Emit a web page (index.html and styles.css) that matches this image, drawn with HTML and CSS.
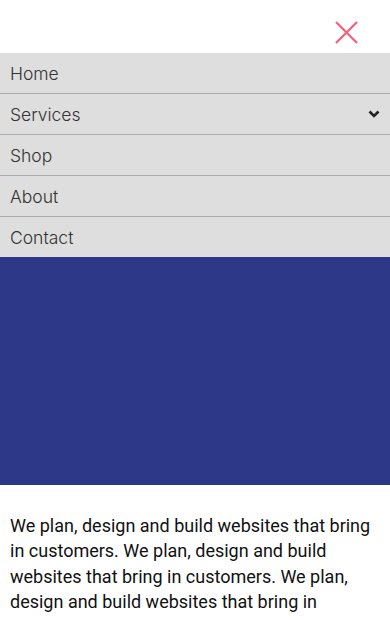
FILE: index.html
```html
<!DOCTYPE html>
<html>
<head>
<meta charset="utf-8">
<link rel="stylesheet" href="styles.css">
</head>
<body>
<header class="top">
  <button class="close" aria-label="Close">
    <svg width="24" height="24" viewBox="0 0 24 24"><path d="M2 1L23 22M23 1L2 22" stroke="#f5607a" stroke-width="2.2" fill="none"/></svg>
  </button>
</header>
<nav class="menu">
  <a class="item" href="#">Home</a>
  <a class="item" href="#">Services
    <svg class="chev" width="12" height="8" viewBox="0 0 12 8"><path d="M1.5 1.5L6 6L10.5 1.5" stroke="#222" stroke-width="2.6" fill="none"/></svg>
  </a>
  <a class="item" href="#">Shop</a>
  <a class="item" href="#">About</a>
  <a class="item" href="#">Contact</a>
</nav>
<section class="hero"></section>
<section class="content">
  <p>We plan, design and build websites that bring in customers. We plan, design and build websites that bring in customers. We plan, design and build websites that bring in customers.</p>
</section>
</body>
</html>
```
FILE: styles.css
```css
html, body { margin: 0; padding: 0; background: #fff; }
body { font-family: Roboto, "Liberation Sans", sans-serif; overflow: hidden; height: 620px; }
.top { height: 53px; display: flex; justify-content: flex-end; align-items: center; padding-right: 32px; }
.close { background: none; border: 0; padding: 0; margin-top: 12px; width: 24px; height: 24px; display: block; }
.close svg { display: block; }
.menu { background: #dedede; display: flex; flex-direction: column; }
.item { height: 40px; display: flex; align-items: center; justify-content: space-between; padding: 0 10px; color: #333; text-decoration: none; font-family: Inter, sans-serif; font-weight: 300; font-size: 17.5px; border-bottom: 1px solid #aaa; }
.item:last-child { border-bottom: 0; }
.hero { background: #2e3889; height: 228px; }
.content { padding: 28px 10px 0; }
.content p { margin: 0; font-size: 18px; line-height: 25.3px; color: #111; }
```
